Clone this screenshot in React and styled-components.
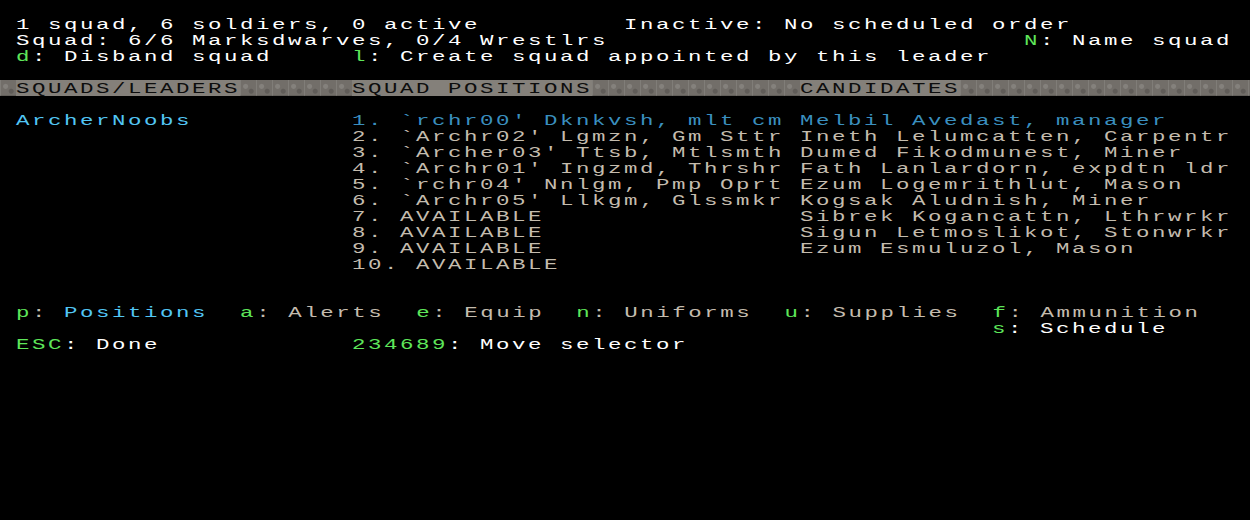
import React from "react";
import styled, { createGlobalStyle } from "styled-components";

// one terminal cell is 16x16; glyphs are stretched to look like the wide tile font
const CELL = 16;
const SX = 1.6;
const LS = CELL / SX - 14 * 0.6;

const palette = {
  white: "#ffffff",
  grey: "#c4bcae",
  green: "#5ee65a",
  cyan: "#52c6f4",
  blue: "#3a8fbf",
  dark: "#0d0d0d"
};

const GlobalStyle = createGlobalStyle`
  body {
    margin: 0;
    background: #000;
  }
`;

const Screen = styled.div`
  width: 1250px;
  height: 520px;
  box-sizing: border-box;
  padding-top: ${CELL}px;
  background: #000;
  overflow: hidden;
  font-family: "Liberation Mono", "DejaVu Sans Mono", monospace;
  font-size: 14px;
  line-height: ${CELL}px;
`;

const Line = styled.div`
  display: flex;
  height: ${CELL}px;
  padding-left: ${p => (p.$indent ?? 1) * CELL}px;
`;

const Gap = styled.div`
  height: ${p => (p.$rows || 1) * CELL}px;
`;

const Cell = styled.div`
  flex: none;
  width: ${p => (p.$cols ? `${p.$cols * CELL}px` : "auto")};
  height: ${CELL}px;
  white-space: pre;
`;

const Glyphs = styled.span`
  display: inline-block;
  white-space: pre;
  transform: translateY(1px) scaleX(${SX});
  transform-origin: left top;
  letter-spacing: ${LS}px;
  color: ${p => palette[p.$c || "white"]};
`;

const Key = styled.span`
  color: ${palette.green};
`;

const Tone = styled.span`
  color: ${p => palette[p.$c]};
`;

const HeaderBar = styled.div`
  display: flex;
  height: ${CELL}px;
  padding-left: ${CELL}px;
  background-color: #726e69;
  background-image:
    radial-gradient(circle at 35% 40%, rgba(255, 255, 255, 0.13) 0 2px, transparent 3px),
    radial-gradient(circle at 70% 70%, rgba(0, 0, 0, 0.16) 0 2px, transparent 3px),
    linear-gradient(90deg, rgba(255, 255, 255, 0.1) 1px, transparent 1px),
    linear-gradient(0deg, rgba(0, 0, 0, 0.15) 1px, transparent 1px);
  background-size: ${CELL}px ${CELL}px;
`;

const HeaderLabel = styled(Glyphs)`
  transform: scaleX(${SX});
  padding-top: 1px;
  height: ${CELL - 1}px;
  color: ${palette.dark};
  background: #84807a;
`;

const Columns = styled.div`
  display: flex;
  padding-left: ${CELL}px;
`;

const Column = styled.div`
  flex: none;
  width: ${p => (p.$cols ? `${p.$cols * CELL}px` : "auto")};
  display: flex;
  flex-direction: column;
`;

const positions = [
  "1. `rchr00' Dknkvsh, mlt cm",
  "2. `Archr02' Lgmzn, Gm Sttr",
  "3. `Archer03' Ttsb, Mtlsmth",
  "4. `Archr01' Ingzmd, Thrshr",
  "5. `rchr04' Nnlgm, Pmp Oprt",
  "6. `Archr05' Llkgm, Glssmkr",
  "7. AVAILABLE",
  "8. AVAILABLE",
  "9. AVAILABLE",
  "10. AVAILABLE"
];

const candidates = [
  "Melbil Avedast, manager",
  "Ineth Lelumcatten, Carpentr",
  "Dumed Fikodmunest, Miner",
  "Fath Lanlardorn, expdtn ldr",
  "Ezum Logemrithlut, Mason",
  "Kogsak Aludnish, Miner",
  "Sibrek Kogancattn, Lthrwrkr",
  "Sigun Letmoslikot, Stonwrkr",
  "Ezum Esmuluzol, Mason"
];

const menu = [
  { key: "p", label: "Positions", c: "cyan" },
  { key: "a", label: "Alerts", c: "grey" },
  { key: "e", label: "Equip", c: "grey" },
  { key: "n", label: "Uniforms", c: "grey" },
  { key: "u", label: "Supplies", c: "grey" },
  { key: "f", label: "Ammunition", c: "grey" }
];

const Row = ({ text, c }) => (
  <Cell>
    <Glyphs $c={c}>{text}</Glyphs>
  </Cell>
);

export default function App() {
  return (
    <>
      <GlobalStyle />
      <Screen>
        <Line>
          <Cell $cols={38}>
            <Glyphs>1 squad, 6 soldiers, 0 active</Glyphs>
          </Cell>
          <Cell>
            <Glyphs>Inactive: No scheduled order</Glyphs>
          </Cell>
        </Line>
        <Line>
          <Cell $cols={63}>
            <Glyphs>Squad: 6/6 Marksdwarves, 0/4 Wrestlrs</Glyphs>
          </Cell>
          <Cell>
            <Glyphs><Key>N</Key>: Name squad</Glyphs>
          </Cell>
        </Line>
        <Line>
          <Cell $cols={21}>
            <Glyphs><Key>d</Key>: Disband squad</Glyphs>
          </Cell>
          <Cell>
            <Glyphs><Key>l</Key>: Create squad appointed by this leader</Glyphs>
          </Cell>
        </Line>
        <Gap />
        <HeaderBar>
          <Cell $cols={21}>
            <HeaderLabel>SQUADS/LEADERS</HeaderLabel>
          </Cell>
          <Cell $cols={28}>
            <HeaderLabel>SQUAD POSITIONS</HeaderLabel>
          </Cell>
          <Cell>
            <HeaderLabel>CANDIDATES</HeaderLabel>
          </Cell>
        </HeaderBar>
        <Gap />
        <Columns>
          <Column $cols={21}>
            <Row text="ArcherNoobs" c="cyan" />
          </Column>
          <Column $cols={28}>
            {positions.map((p, i) => (
              <Row key={p + i} text={p} c={i === 0 ? "blue" : "grey"} />
            ))}
          </Column>
          <Column>
            {candidates.map((p, i) => (
              <Row key={p + i} text={p} c={i === 0 ? "blue" : "grey"} />
            ))}
          </Column>
        </Columns>
        <Gap $rows={2} />
        <Line>
          <Cell>
            <Glyphs>
              {menu.map((m, i) => (
                <React.Fragment key={m.key}>
                  {i > 0 ? "  " : ""}
                  <Key>{m.key}</Key>
                  <Tone $c="grey">: </Tone>
                  <Tone $c={m.c}>{m.label}</Tone>
                </React.Fragment>
              ))}
            </Glyphs>
          </Cell>
        </Line>
        <Line $indent={62}>
          <Cell>
            <Glyphs><Key>s</Key>: Schedule</Glyphs>
          </Cell>
        </Line>
        <Line>
          <Cell $cols={21}>
            <Glyphs><Key>ESC</Key>: Done</Glyphs>
          </Cell>
          <Cell>
            <Glyphs><Key>234689</Key>: Move selector</Glyphs>
          </Cell>
        </Line>
      </Screen>
    </>
  );
}
